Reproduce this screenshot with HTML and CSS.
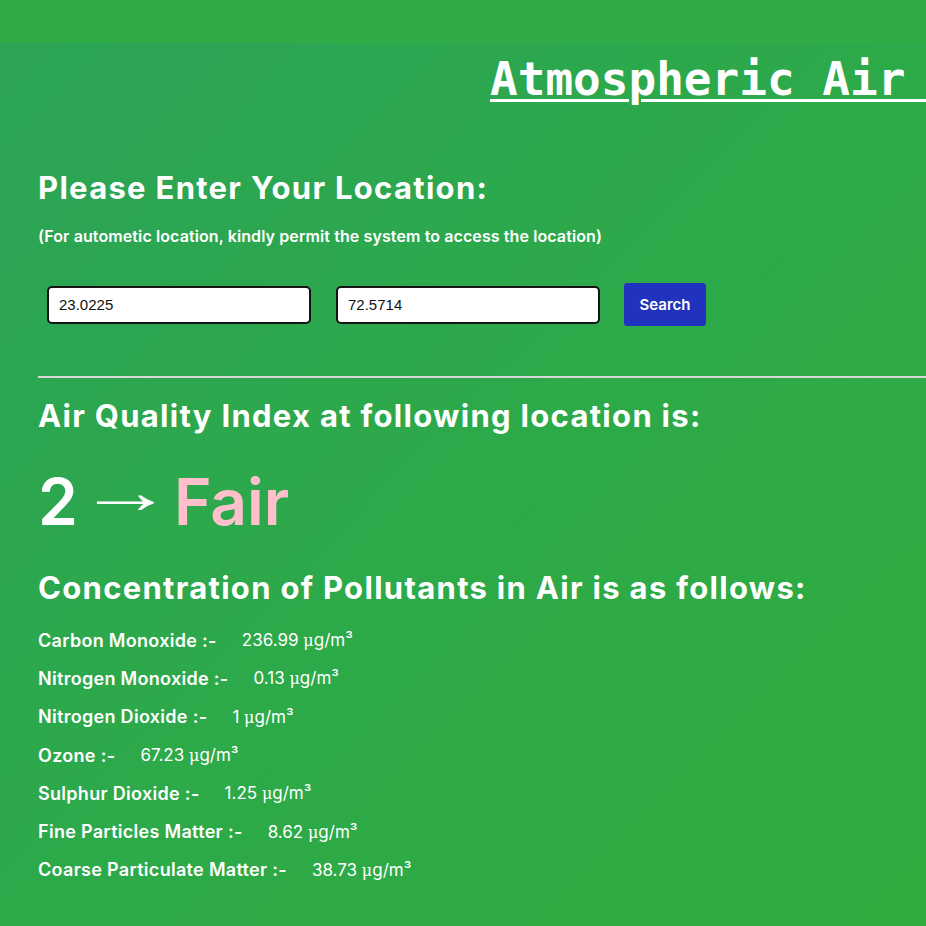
FILE: index.html
```html
<!DOCTYPE html>
<html>
<head>
<meta charset="utf-8">
<link rel="stylesheet" href="styles.css">
</head>
<body>
<div class="topbar"></div>
<main class="page">
  <h1 class="title">Atmospheric Air&nbsp;</h1>
  <section class="content">
    <h2 class="heading first">Please Enter Your Location:</h2>
    <p class="note">(For autometic location, kindly permit the system to access the location)</p>
    <div class="form">
      <input class="field" type="text" value="23.0225">
      <input class="field" type="text" value="72.5714">
      <button class="btn">Search</button>
    </div>
    <hr class="rule">
    <h2 class="heading">Air Quality Index at following location is:</h2>
    <div class="aqi"><span class="num">2</span><span class="arrow">&rarr;</span><span class="fair">Fair</span></div>
    <h2 class="heading conc">Concentration of Pollutants in Air is as follows:</h2>
    <ul class="list">
      <li><span class="lbl">Carbon Monoxide :-</span><span class="val">236.99 <span class="mu">μ</span>g/m³</span></li>
      <li><span class="lbl">Nitrogen Monoxide :-</span><span class="val">0.13 <span class="mu">μ</span>g/m³</span></li>
      <li><span class="lbl">Nitrogen Dioxide :-</span><span class="val">1 <span class="mu">μ</span>g/m³</span></li>
      <li><span class="lbl">Ozone :-</span><span class="val">67.23 <span class="mu">μ</span>g/m³</span></li>
      <li><span class="lbl">Sulphur Dioxide :-</span><span class="val">1.25 <span class="mu">μ</span>g/m³</span></li>
      <li><span class="lbl">Fine Particles Matter :-</span><span class="val">8.62 <span class="mu">μ</span>g/m³</span></li>
      <li><span class="lbl">Coarse Particulate Matter :-</span><span class="val">38.73 <span class="mu">μ</span>g/m³</span></li>
    </ul>
  </section>
</main>
</body>
</html>
```
FILE: styles.css
```css
html, body {
  margin: 0;
  padding: 0;
}
body {
  width: 926px;
  height: 926px;
  overflow: hidden;
  background: #2fab47;
  color: #fff;
}
.topbar {
  height: 43px;
  background: #2fac46;
}
.page {
  height: 883px;
  background: linear-gradient(135deg, #2ba457 0%, #2daa48 55%, #2fac3f 100%);
  overflow: hidden;
}
.title {
  margin: 0;
  padding: 10px 0 0 490px;
  font-family: "DejaVu Sans Mono", monospace;
  font-weight: bold;
  font-size: 46px;
  line-height: 52px;
  white-space: nowrap;
  text-decoration: underline;
  text-decoration-thickness: 3px;
  text-underline-offset: 4px;
}
.content {
  padding-left: 38px;
}
.heading {
  margin: 0;
  font-family: "Inter", sans-serif;
  font-weight: 700;
  font-size: 31px;
  line-height: 36px;
  letter-spacing: 1.3px;
}
.heading.first {
  margin-top: 65px;
}
.note {
  margin: 20px 0 0;
  font-family: "Inter", sans-serif;
  font-weight: 600;
  font-size: 16px;
  line-height: 20px;
  letter-spacing: 0.1px;
}
.form {
  display: flex;
  align-items: center;
  margin: 37px 0 0 9px;
}
.field {
  box-sizing: border-box;
  width: 264px;
  height: 38px;
  margin: 0 25px 0 0;
  padding: 0 10px;
  border: 2px solid #141414;
  border-radius: 5px;
  background: #fff;
  color: #111;
  font-family: "Liberation Sans", Arial, sans-serif;
  font-size: 15px;
}
.field + .field {
  margin-right: 24px;
}
.btn {
  height: 43px;
  width: 82px;
  border: none;
  border-radius: 3px;
  background: #2133be;
  color: #fff;
  font-family: "Inter", sans-serif;
  font-weight: 600;
  font-size: 15px;
  padding: 0;
}
.rule {
  margin: 50px 0 0;
  border: none;
  border-top: 2px solid #d8d8d8;
  height: 0;
}
.rule + .heading {
  margin-top: 20px;
}
.aqi {
  margin-top: 28px;
  height: 80px;
  font-family: "Inter", sans-serif;
  font-weight: 600;
  font-size: 64px;
  line-height: 80px;
  white-space: nowrap;
}
.arrow {
  display: inline-block;
  margin: 0 35px 0 -1px;
  font-family: "Liberation Sans", sans-serif;
  font-weight: 400;
  font-size: 62px;
  line-height: 30px;
  transform: scaleX(1.55);
  transform-origin: left center;
  vertical-align: 12px;
}
.num { color: #fff; }
.fair { color: #ffc0cb; }
.heading.conc {
  margin-top: 28px;
}
.list {
  list-style: none;
  margin: 15px 0 0;
  padding: 0;
}
.list li {
  height: 38.3px;
  display: flex;
  align-items: center;
  font-family: "Inter", sans-serif;
}
.lbl {
  font-weight: 600;
  font-size: 18px;
  letter-spacing: 0.3px;
  margin-right: 25px;
}
.val {
  font-weight: 400;
  font-size: 17px;
}
.mu {
  font-family: "DejaVu Serif", serif;
  font-size: 16px;
}
```
